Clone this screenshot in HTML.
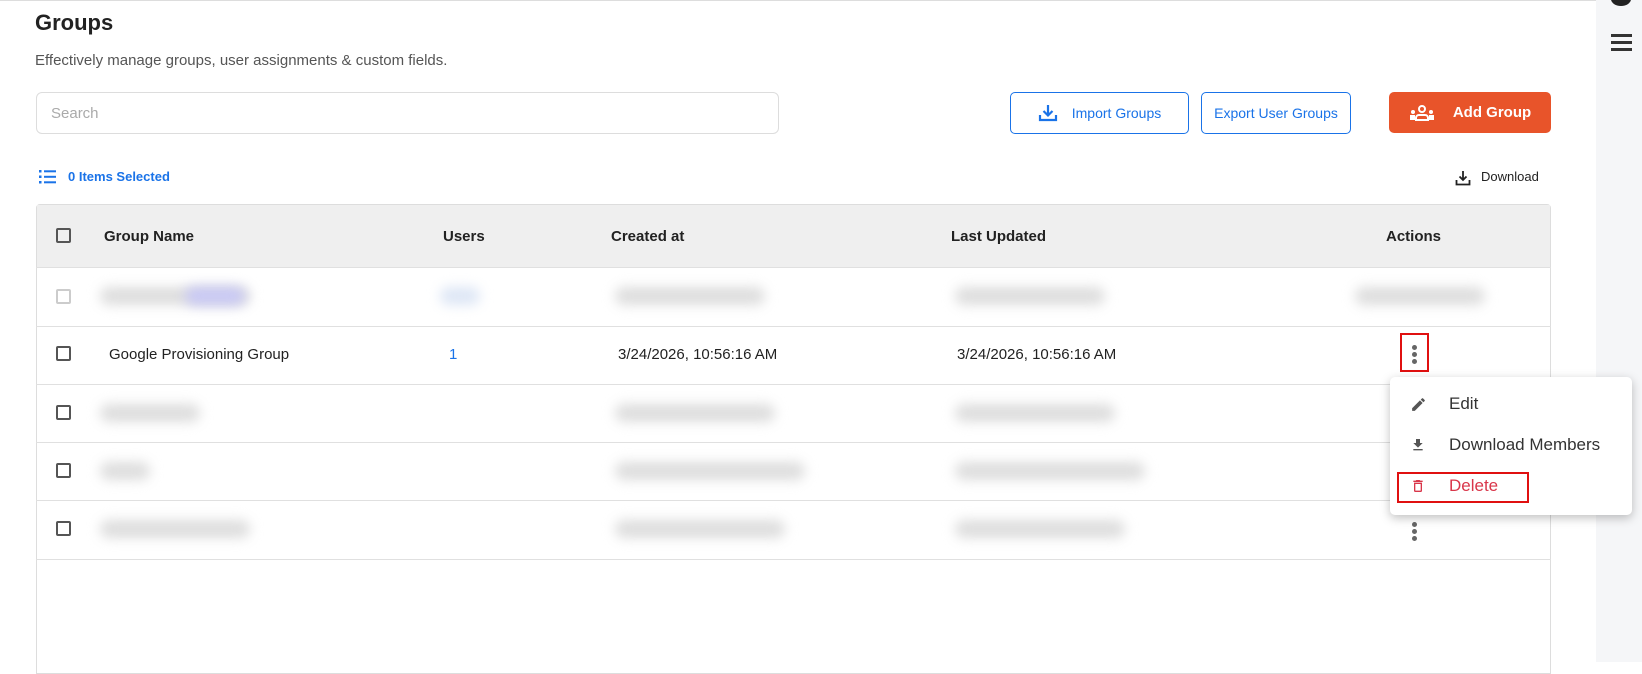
<!DOCTYPE html>
<html><head><meta charset="utf-8"><style>
*{box-sizing:border-box;margin:0;padding:0}
body{width:1642px;height:662px;overflow:hidden;background:#fff;font-family:"Liberation Sans",sans-serif;position:relative;color:#222}
.a{position:absolute}
.btn{position:absolute;top:92px;height:42px;border:1px solid #1a73e8;border-radius:5px;color:#1a73e8;font-size:14px;display:flex;align-items:center;justify-content:center;background:#fff;white-space:nowrap}
.cb{position:absolute;width:15px;height:15px;border:2px solid #555;border-radius:2px}
.hd{position:absolute;top:228px;font-size:15px;font-weight:bold;color:#222}
.line{position:absolute;left:36px;width:1515px;height:1px;background:#e0e0e0}
.blur{position:absolute;height:18px;background:#ddd;border-radius:9px;filter:blur(6px)}
.cell{position:absolute;font-size:15px;color:#222}
</style></head><body>
<div class="a" style="left:0;top:0;width:1596px;height:1px;background:#ddd"></div>
<div class="a" style="left:1596px;top:0;width:46px;height:662px;background:#f5f6f8"></div>
<div class="a" style="left:1611px;top:-8px;width:20px;height:14px;border-radius:50%;background:#222"></div>
<div class="a" style="left:1611px;top:34px;width:21px;height:3px;background:#333;box-shadow:0 7px 0 #333,0 14px 0 #333"></div>

<div class="a" style="left:35px;top:10px;font-size:22px;font-weight:bold;color:#222">Groups</div>
<div class="a" style="left:35px;top:52px;font-size:15px;color:#555">Effectively manage groups, user assignments &amp; custom fields.</div>
<div class="a" style="left:36px;top:92px;width:743px;height:42px;border:1px solid #ddd;border-radius:6px;padding:12px 14px;font-size:15px;color:#aaa">Search</div>

<div class="btn" style="left:1010px;width:179px"><svg width="20" height="20" viewBox="0 0 20 20" style="margin-right:14px"><path d="M10 2v10M5.5 8l4.5 4.5L14.5 8M2 12v5h16v-5" fill="none" stroke="#1a73e8" stroke-width="2.2"/></svg>Import Groups</div>
<div class="btn" style="left:1201px;width:150px">Export User Groups</div>
<div class="btn" style="left:1389px;width:162px;height:41px;background:#e8542a;border-color:#e8542a;color:#fff;font-weight:bold;font-size:15px">
<svg width="26" height="16" viewBox="0 0 26 16" style="margin-right:18px"><circle cx="13" cy="4" r="3" fill="none" stroke="#fff" stroke-width="2"/><path d="M7 15v-2a3 3 0 0 1 3-3h6a3 3 0 0 1 3 3v2z" fill="none" stroke="#fff" stroke-width="2"/><circle cx="4" cy="7" r="2" fill="#fff"/><circle cx="22" cy="7" r="2" fill="#fff"/><rect x="1" y="10" width="5" height="5" fill="#fff"/><rect x="20" y="10" width="5" height="5" fill="#fff"/></svg>Add Group</div>

<svg class="a" style="left:39px;top:170px" width="17" height="14" viewBox="0 0 17 14"><g fill="#1a73e8"><rect x="0" y="0" width="2.5" height="2.5"/><rect x="0" y="5.5" width="2.5" height="2.5"/><rect x="0" y="11" width="2.5" height="2.5"/><rect x="5" y="0.3" width="12" height="2"/><rect x="5" y="5.8" width="12" height="2"/><rect x="5" y="11.3" width="12" height="2"/></g></svg>
<div class="a" style="left:68px;top:169px;font-size:13px;font-weight:bold;color:#1a73e8">0 Items Selected</div>
<svg class="a" style="left:1455px;top:170px" width="16" height="16" viewBox="0 0 16 16"><path d="M8 1v9M4.5 6.5L8 10l3.5-3.5M1.5 10v4.5h13V10" fill="none" stroke="#222" stroke-width="1.8"/></svg>
<div class="a" style="left:1481px;top:169px;font-size:13px;color:#222">Download</div>

<div class="a" style="left:36px;top:204px;width:1515px;height:470px;border:1px solid #ddd;border-radius:4px 4px 0 0"></div>
<div class="a" style="left:37px;top:205px;width:1513px;height:62px;background:#efefef"></div>
<div class="cb" style="left:56px;top:228px"></div>
<div class="hd" style="left:104px">Group Name</div>
<div class="hd" style="left:443px">Users</div>
<div class="hd" style="left:611px">Created at</div>
<div class="hd" style="left:951px">Last Updated</div>
<div class="hd" style="left:1386px">Actions</div>
<div class="line" style="top:267px"></div>
<div class="line" style="top:326px"></div>
<div class="line" style="top:384px"></div>
<div class="line" style="top:442px"></div>
<div class="line" style="top:500px"></div>
<div class="line" style="top:559px"></div>

<div class="cb" style="left:56px;top:289px;border-color:#ccc"></div>
<div class="blur" style="left:100px;top:287px;width:150px"></div>
<div class="blur" style="left:185px;top:287px;width:60px;background:#c8c8f5"></div>
<div class="blur" style="left:440px;top:287px;width:40px;background:#dde6f5"></div>
<div class="blur" style="left:615px;top:287px;width:150px"></div>
<div class="blur" style="left:955px;top:287px;width:150px"></div>
<div class="blur" style="left:1355px;top:287px;width:130px"></div>

<div class="cb" style="left:56px;top:346px"></div>
<div class="cell" style="left:109px;top:346px">Google Provisioning Group</div>
<div class="cell" style="left:449px;top:346px;color:#1a73e8">1</div>
<div class="cell" style="left:618px;top:346px">3/24/2026, 10:56:16 AM</div>
<div class="cell" style="left:957px;top:346px">3/24/2026, 10:56:16 AM</div>
<div class="a" style="left:1400px;top:333px;width:29px;height:39px;border:2px solid #e01010"></div>
<div class="a" style="left:1412px;top:345px;width:5px;height:5px;border-radius:50%;background:#666;box-shadow:0 7px 0 #666,0 14px 0 #666"></div>

<div class="cb" style="left:56px;top:405px"></div>
<div class="blur" style="left:100px;top:404px;width:100px"></div>
<div class="blur" style="left:615px;top:404px;width:160px"></div>
<div class="blur" style="left:955px;top:404px;width:160px"></div>
<div class="cb" style="left:56px;top:463px"></div>
<div class="blur" style="left:100px;top:462px;width:50px"></div>
<div class="blur" style="left:615px;top:462px;width:190px"></div>
<div class="blur" style="left:955px;top:462px;width:190px"></div>
<div class="cb" style="left:56px;top:521px"></div>
<div class="blur" style="left:100px;top:520px;width:150px"></div>
<div class="blur" style="left:615px;top:520px;width:170px"></div>
<div class="blur" style="left:955px;top:520px;width:170px"></div>
<div class="a" style="left:1412px;top:522px;width:5px;height:5px;border-radius:50%;background:#666;box-shadow:0 7px 0 #666,0 14px 0 #666"></div>

<div class="a" style="left:1390px;top:377px;width:242px;height:138px;background:#fff;border-radius:5px;box-shadow:0 3px 10px rgba(0,0,0,.25)"></div>
<svg class="a" style="left:1410px;top:396px" width="17" height="17" viewBox="0 0 24 24"><path d="M3 17.25V21h3.75L17.8 9.94l-3.75-3.75zM20.7 7.04a1 1 0 0 0 0-1.41l-2.34-2.34a1 1 0 0 0-1.41 0l-1.83 1.83 3.75 3.75z" fill="#555"/></svg>
<div class="a" style="left:1449px;top:394px;font-size:17px;color:#333">Edit</div>
<svg class="a" style="left:1410px;top:437px" width="16" height="16" viewBox="0 0 24 24"><path d="M19 9h-4V3H9v6H5l7 7zM5 18v2h14v-2z" fill="#555"/></svg>
<div class="a" style="left:1449px;top:435px;font-size:17px;color:#333">Download Members</div>
<svg class="a" style="left:1410px;top:478px" width="16" height="16" viewBox="0 0 24 24"><path d="M6 19a2 2 0 0 0 2 2h8a2 2 0 0 0 2-2V7H6zM8 9h8v10H8zM15.5 4l-1-1h-5l-1 1H5v2h14V4z" fill="#d9364a"/></svg>
<div class="a" style="left:1449px;top:476px;font-size:17px;color:#d9364a">Delete</div>
<div class="a" style="left:1397px;top:472px;width:132px;height:31px;border:2px solid #e01010"></div>
</body></html>
